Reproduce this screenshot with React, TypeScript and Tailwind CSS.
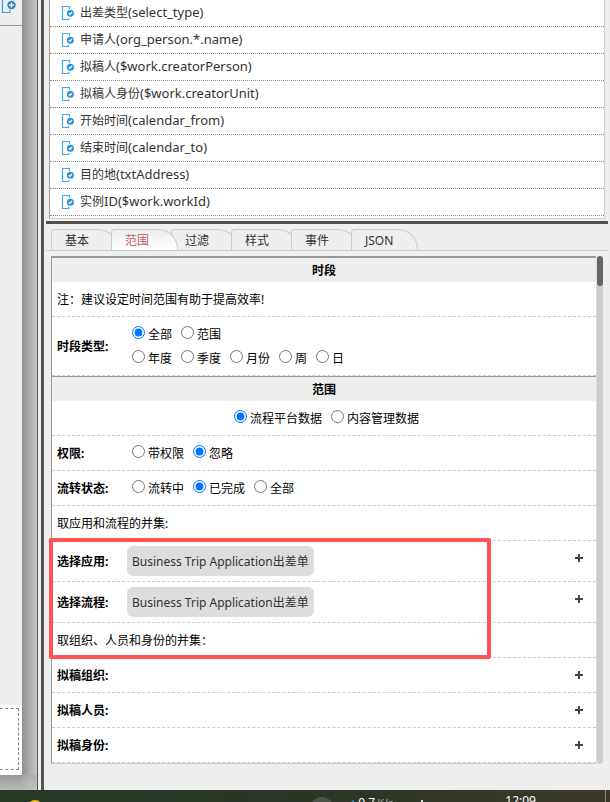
import type { ReactNode } from "react";
import { clsx } from "clsx";

const FIELDS = [
  { title: "出差类型", path: "(select_type)" },
  { title: "申请人", path: "(org_person.*.name)" },
  { title: "拟稿人", path: "($work.creatorPerson)" },
  { title: "拟稿人身份", path: "($work.creatorUnit)" },
  { title: "开始时间", path: "(calendar_from)" },
  { title: "结束时间", path: "(calendar_to)" },
  { title: "目的地", path: "(txtAddress)" },
  { title: "实例", path: "ID($work.workId)" },
];

const TABS = ["基本", "范围", "过滤", "样式", "事件", "JSON"];

function FieldIcon() {
  return (
    <svg width="14" height="16" viewBox="0 0 14 16" fill="none" className="shrink-0">
      <path d="M8.5 4v-2.5h-7v13h6.2V13" stroke="#4aa8e4" strokeWidth="1.2" />
      <circle cx="9.4" cy="8.2" r="4.2" fill="#fff" />
      <circle cx="9.4" cy="8.2" r="3.5" fill="#2f8fd3" />
      <path d="M7.8 8.2l1.2 1.2 2.1-2.4" stroke="#fff" strokeWidth="1.2" />
    </svg>
  );
}

function Radio({ name, label, checked }: { name: string; label: string; checked?: boolean }) {
  return (
    <label className="flex h-6 items-start gap-[3px]">
      <input type="radio" name={name} defaultChecked={checked} className="mt-1 size-[13px] accent-[#0075ff]" />
      <span className="leading-[26px]">{label}</span>
    </label>
  );
}

function Heading({ children }: { children: ReactNode }) {
  return <h2 className="h-6 bg-[#eee] text-center leading-[26px] font-bold">{children}</h2>;
}

function Note({ children }: { children: ReactNode }) {
  return <p className="border-b border-dashed border-[#ccc] px-[5px] pt-1.5 pb-1 leading-6">{children}</p>;
}

function Row({ label, children }: { label: string; children?: ReactNode }) {
  return (
    <div className="flex items-center border-b border-dashed border-[#ccc] px-[5px] py-[5px]">
      <div className="h-6 w-[70px] shrink-0 leading-[26px] font-bold">{label}</div>
      <div className="flex flex-1 items-start justify-between">{children}</div>
    </div>
  );
}

function Radios({ children }: { children: ReactNode }) {
  return <div className="flex gap-[9px] pl-[5px]">{children}</div>;
}

function AddButton({ label }: { label: string }) {
  return (
    <button type="button" aria-label={label} className="mr-0.5 ml-auto flex h-6 w-5 items-center justify-center">
      <svg width="8" height="8" viewBox="0 0 8 8">
        <path d="M4 0v8M0 4h8" stroke="#444" strokeWidth="2" />
      </svg>
    </button>
  );
}

function Chip({ children }: { children: ReactNode }) {
  return <span className="rounded-md bg-[#ddd] px-[5px] pt-0.5 leading-7 text-[#333]">{children}</span>;
}

function FieldList() {
  return (
    <ul className="mr-[3px] ml-[3px] border-r border-b border-l border-[#ccc] border-l-[#999] bg-white pb-0.5">
      {FIELDS.map((f) => (
        <li key={f.title} className="flex h-[27px] items-center gap-1 border-b border-dotted border-[#888] pl-[11px] text-[#333]">
          <FieldIcon />
          <span className="pb-0.5 pl-px leading-5">
            {f.title}
            <span className="text-[13px]">{f.path}</span>
          </span>
        </li>
      ))}
    </ul>
  );
}

function TabBar() {
  return (
    <div role="tablist" className="mt-[5px] flex border-b border-[#ccc] pl-[5px]">
      {TABS.map((t) => (
        <button
          key={t}
          type="button"
          role="tab"
          aria-selected={t === "范围"}
          className={clsx(
            "-mr-[7px] h-[21px] w-[67px] rounded-tl-sm rounded-tr-[20px] border border-b-0 border-[#ccc] pt-0.5 pl-[13px] text-left",
            t === "范围"
              ? "relative z-10 bg-linear-to-b from-[#eee] to-white text-[#c55a5f]"
              : "bg-[#eee] text-[#333]",
          )}
        >
          {t}
        </button>
      ))}
    </div>
  );
}

function RangePanel() {
  return (
    <div className="mt-[5px] mr-[5px] ml-[5px] flex">
      <form className="min-w-0 flex-1 border-t-2 border-b border-l border-[#999] border-b-[#ccc] bg-white">
        <Heading>时段</Heading>
        <Note>注：建议设定时间范围有助于提高效率!</Note>
        <Row label="时段类型:">
          <div>
            <Radios>
              <Radio name="period" label="全部" checked />
              <Radio name="period" label="范围" />
            </Radios>
            <Radios>
              <Radio name="period" label="年度" />
              <Radio name="period" label="季度" />
              <Radio name="period" label="月份" />
              <Radio name="period" label="周" />
              <Radio name="period" label="日" />
            </Radios>
          </div>
        </Row>
        <div className="border-t border-[#999]">
          <Heading>范围</Heading>
        </div>
        <div className="flex justify-center gap-[9px] border-b border-dashed border-[#ccc] py-[5px] pl-[5px]">
          <Radio name="source" label="流程平台数据" checked />
          <Radio name="source" label="内容管理数据" />
        </div>
        <Row label="权限:">
          <Radios>
            <Radio name="auth" label="带权限" />
            <Radio name="auth" label="忽略" checked />
          </Radios>
        </Row>
        <Row label="流转状态:">
          <Radios>
            <Radio name="status" label="流转中" />
            <Radio name="status" label="已完成" checked />
            <Radio name="status" label="全部" />
          </Radios>
        </Row>
        <Note>取应用和流程的并集:</Note>
        <div className="relative">
          <Row label="选择应用:">
            <Chip>Business Trip Application出差单</Chip>
            <AddButton label="选择应用" />
          </Row>
          <Row label="选择流程:">
            <Chip>Business Trip Application出差单</Chip>
            <AddButton label="选择流程" />
          </Row>
          <Note>取组织、人员和身份的并集：</Note>
          <div className="pointer-events-none absolute -top-[3px] right-[105px] -bottom-px -left-[3px] rounded-xs border-4 border-[#ff5353]" />
        </div>
        <Row label="拟稿组织:">
          <AddButton label="拟稿组织" />
        </Row>
        <Row label="拟稿人员:">
          <AddButton label="拟稿人员" />
        </Row>
        <Row label="拟稿身份:">
          <AddButton label="拟稿身份" />
        </Row>
      </form>
      <div className="w-[7px] rounded-sm border-l border-[#ddd] bg-[#ccc]">
        <div className="h-[30px] rounded-sm bg-[#666]" />
      </div>
    </div>
  );
}

function Canvas() {
  return (
    <div className="flex w-[37px] shrink-0 bg-[#bbb]">
      <div className="flex w-[22px] flex-col">
        <div className="h-[26px] border-b border-[#999] bg-[#eee]">
          <svg width="17" height="16" viewBox="0 0 17 16" fill="none">
            <path d="M2.5 0v12.5H10V10" stroke="#3b9fe0" strokeWidth="1.2" />
            <circle cx="11.5" cy="5" r="4.2" fill="#2a86bd" />
            <path d="M11.5 2.5v5M9 5h5" stroke="#eee" strokeWidth="1.3" />
          </svg>
        </div>
        <div className="flex-1 bg-[#eee]" />
        <div className="h-[70px] bg-white py-[3px] pr-[3px]">
          <div className="h-[62px] border border-l-0 border-dashed border-[#888]" />
        </div>
        <div className="h-[15px] bg-linear-to-b from-[#999] to-[#b8b8b8]" />
      </div>
      <div className="flex flex-1 flex-col">
        <div className="flex-1 bg-linear-to-r from-[#909090] to-[#c6c6c6]" />
        <div className="h-[15px] bg-linear-to-br from-[#a4a4a4] to-[#c6c6c6]" />
      </div>
    </div>
  );
}

function Taskbar() {
  return (
    <footer className="flex h-3 items-start overflow-hidden bg-linear-to-r from-[#263a28] via-[#2a3526] to-[#3b382a] text-white">
      <div className="mt-2.5 ml-[27px] size-4 shrink-0 rounded-full bg-[#f2c216]" />
      <div className="mt-[7px] ml-auto size-6 shrink-0 rounded-full bg-[#4c524a]" />
      <svg width="6" height="4" viewBox="0 0 6 4" className="mt-2.5 ml-4">
        <path d="M3 0l3 4H0z" fill="#35a8d8" />
      </svg>
      <div className="flex items-baseline gap-0.5 pt-[5px] pl-0.5 leading-4">
        <span>0.7</span>
        <span className="text-[11px] text-[#aaa]">K/s</span>
      </div>
      <div className="mt-2.5 ml-7 h-2 w-0.5 bg-[#ddd]" />
      <time className="mr-[69px] ml-[82px] pt-[3px] leading-4">12:09</time>
      <div className="h-3 w-px bg-[#888]" />
      <div className="w-1" />
    </footer>
  );
}

export default function App() {
  return (
    <div className="flex min-h-screen flex-col overflow-hidden bg-[#eee] font-['Noto_Sans','Noto_Sans_CJK_SC',sans-serif] text-xs text-black">
      <div className="flex flex-1">
        <Canvas />
        <div className="w-[7px] shrink-0 border-r-3 border-l border-[#555] bg-[#eee]" />
        <main className="mr-0.5 min-w-0 flex-1 pb-[26px] pl-0.5">
          <FieldList />
          <div className="mt-0.5 h-[3px] bg-[#505050]" />
          <TabBar />
          <RangePanel />
        </main>
      </div>
      <Taskbar />
    </div>
  );
}
